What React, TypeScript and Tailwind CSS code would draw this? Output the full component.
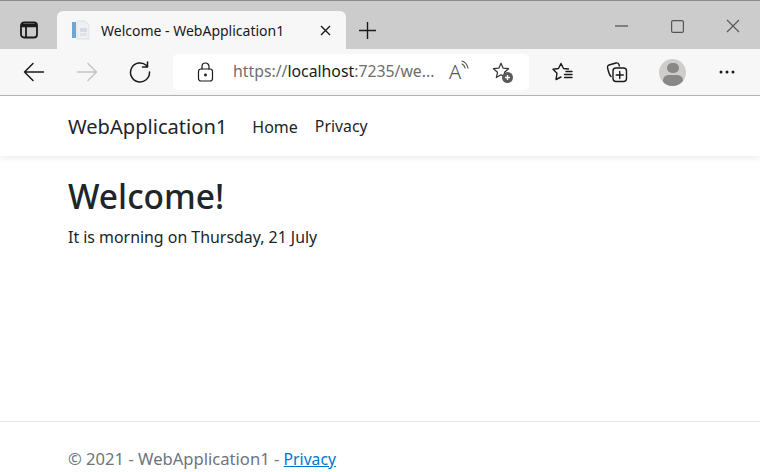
import React from 'react';

const stroke = { fill: 'none', stroke: 'currentColor', strokeWidth: 1.3, strokeLinecap: 'round', strokeLinejoin: 'round' } as const;

const Star = 'M10 2.2l2.2 5 5.4.5-4.1 3.6 1.2 5.3L10 13.8l-4.7 2.8 1.2-5.3-4.1-3.6 5.4-.5z';

const Toolbar: React.FC = () => {
  return (
    <div className="h-[46px] flex items-center bg-[#f7f7f7] text-[#1a1a1a]">
      {/* back / forward / refresh */}
      <div className="w-[173px] shrink-0 flex items-center pl-[23px]">
        <svg className="w-[22px] h-[22px]" viewBox="0 0 22 22" {...stroke} strokeWidth={1.5}>
          <path d="M1.5 11h19M10 2.5L1.5 11l8.500 8.500" />
        </svg>
        <svg className="w-[22px] h-[22px] ml-[31px] text-[#c4c4c4]" viewBox="0 0 22 22" {...stroke} strokeWidth={1.5}>
          <path d="M1.5 11h19M12 2.5l8.500 8.500-8.500 8.500" />
        </svg>
        <svg className="w-[22px] h-[22px] ml-[31px]" viewBox="0 0 22 22" {...stroke} strokeWidth={1.5}>
          <path d="M17.5 4.5A9.5 9.5 0 1 0 20.5 11M18.5 1v5h-5" />
        </svg>
      </div>

      {/* address box */}
      <div className="w-[356px] h-[36px] shrink-0 bg-white rounded-[5px] flex items-center pl-[24px]">
        <svg className="w-[17px] h-[20px]" viewBox="0 0 17 20" {...stroke} strokeWidth={1.2}>
          <rect x="1.5" y="7" width="14" height="12" rx="2.5" />
          <path d="M5 7V4.5a3.5 3.5 0 0 1 7 0V7" />
          <circle cx="8.5" cy="13" r="0.8" fill="currentColor" />
        </svg>
        <span className="ml-[19px] w-[217px] text-[15.8px] text-[#6e6e6e] whitespace-nowrap">
          https://<span className="text-[#1a1a1a]">localhost</span>:7235/we...
        </span>
        <span className="relative w-[20px] -ml-[1px] text-[20px] leading-none font-light text-[#555]">
          A
          <svg className="absolute -top-[2px] left-[11px] w-[9px] h-[10px]" viewBox="0 0 9 10" {...stroke} strokeWidth={1.2}>
            <path d="M2 1c3 1 5 3 6 7M2 4c1.500.5 2.500 1.500 3 4" />
          </svg>
        </span>
        <span className="relative ml-[22px] w-[22px] h-[22px] text-[#333]">
          <svg className="w-[20px] h-[20px]" viewBox="0 0 20 20" {...stroke} strokeWidth={1.2}>
            <path d={Star} />
          </svg>
          <svg className="absolute right-0 bottom-0 w-[11px] h-[11px]" viewBox="0 0 11 11">
            <circle cx="5.5" cy="5.5" r="5.5" fill="#5a5a5a" />
            <path d="M5.5 3v5M3 5.500h5" stroke="#fff" strokeWidth="1.3" />
          </svg>
        </span>
      </div>

      {/* right tools */}
      <div className="flex items-center">
        <svg className="w-[22px] h-[20px] ml-[23px]" viewBox="0 0 22 20" {...stroke} strokeWidth={1.4}>
          <path d="M16.5 7l-5-.5L9 1.500 6.500 6.500 1 7.300l4 3.900-1 6.300 5-2.500M14 9.500h6M12.500 12.500h7.500M12.500 15.500h7.500" />
        </svg>
        <svg className="w-[22px] h-[22px] ml-[32px]" viewBox="0 0 22 22" {...stroke} strokeWidth={1.4}>
          <path d="M5 15.500C3.500 14 2 9 1.500 6.500 1.300 5 2 4.300 3 4l7-2c1.500-.4 2.500.3 3 1.500l.3 1.500" />
          <rect x="7" y="7" width="13.5" height="13.5" rx="3" />
          <path d="M13.750 10.500v7M10.250 14h7" />
        </svg>
        <div className="w-[27px] h-[27px] ml-[31px] rounded-full bg-[#cfcdcb] overflow-hidden flex flex-col items-center">
          <div className="w-[12px] h-[12px] mt-[4px] rounded-full bg-[#8a8886]" />
          <div className="w-[20px] h-[12px] mt-[2px] rounded-full bg-[#8a8886]" />
        </div>
        <svg className="w-[16px] h-[4px] ml-[33px]" viewBox="0 0 16 4" fill="#1a1a1a">
          <circle cx="2" cy="2" r="1.5" />
          <circle cx="8" cy="2" r="1.5" />
          <circle cx="14" cy="2" r="1.5" />
        </svg>
      </div>
    </div>
  );
};

const App: React.FC = () => {
  return (
    <div className="w-[760px] h-[472px] overflow-hidden flex flex-col bg-white font-['Noto_Sans','Open_Sans',sans-serif]">
      {/* title bar */}
      <div className="h-[49px] shrink-0 bg-[#cccccc] border-t border-[#8c8c8c] flex items-end">
        <div className="w-[57px] h-[38px] flex items-center justify-center">
          <svg className="w-[18px] h-[18px]" viewBox="0 0 18 18" fill="none" stroke="#1a1a1a" strokeWidth="1.8">
            <rect x="1" y="1.5" width="16" height="15" rx="3" />
            <path d="M1 4.500h16" strokeWidth="3.5" />
            <path d="M6 6v10" />
          </svg>
        </div>
        <div className="w-[289px] h-[38px] bg-[#f7f7f7] rounded-t-[6px] flex items-center pl-[15px]">
          <svg className="w-[20px] h-[20px]" viewBox="0 0 20 20">
            <rect x="0" y="2" width="4" height="16" fill="#6aa7d8" />
            <path d="M5 1h8l4 4v14H5z" fill="#eef1f4" stroke="#d5d9dd" strokeWidth="0.7" />
            <rect x="8" y="8" width="7" height="4" fill="#d5dbe0" />
            <rect x="8" y="13" width="7" height="3" fill="#dfe3e7" />
          </svg>
          <span className="ml-[9px] w-[219px] text-[14px] text-[#1a1a1a] whitespace-nowrap">Welcome - WebApplication1</span>
          <svg className="w-[11px] h-[11px]" viewBox="0 0 11 11" stroke="#1a1a1a" strokeWidth="1.4">
            <path d="M1 1l9 9M10 1l-9 9" />
          </svg>
        </div>
        <div className="h-[38px] flex items-center ml-[13px]">
          <svg className="w-[17px] h-[17px]" viewBox="0 0 17 17" stroke="#1a1a1a" strokeWidth="1.4">
            <path d="M8.500 0v17M0 8.500h17" />
          </svg>
        </div>
        {/* window controls */}
        <div className="ml-auto self-start flex items-center h-[50px] text-[#555]">
          <svg className="w-[13px] h-[2px]" viewBox="0 0 13 2" stroke="currentColor" strokeWidth="1.3">
            <path d="M0 1h13" />
          </svg>
          <svg className="w-[13px] h-[13px] ml-[43px]" viewBox="0 0 13 13" fill="none" stroke="currentColor" strokeWidth="1.2">
            <rect x="0.6" y="0.6" width="11.8" height="11.8" rx="1.5" />
          </svg>
          <svg className="w-[14px] h-[14px] ml-[42px] mr-[20px]" viewBox="0 0 14 14" stroke="currentColor" strokeWidth="1.1">
            <path d="M1 1l12 12M13 1L1 13" />
          </svg>
        </div>
      </div>

      <Toolbar />
      <div className="h-[1px] shrink-0 bg-[#b5b5b5]" />

      {/* page navbar */}
      <nav className="h-[60px] shrink-0 flex items-center pl-[68px] pt-[2px] bg-white shadow-[0_2px_6px_rgba(0,0,0,0.08)] text-[#212529]">
        <span className="text-[20.1px]">WebApplication1</span>
        <a className="ml-[25px] text-[16px]">Home</a>
        <a className="ml-[17px] text-[15.8px]">Privacy</a>
      </nav>

      {/* page body */}
      <main className="h-[265px] shrink-0 pl-[68px] pt-[16px] text-[#212529]">
        <h1 className="text-[33.5px] leading-[48px] font-medium">Welcome!</h1>
        <p className="mt-[5px] text-[15.9px] leading-[24px]">It is morning on Thursday, 21 July</p>
      </main>

      {/* footer */}
      <footer className="flex-1 border-t border-[#e5e5e5] pl-[68px] pt-[25px] text-[16.6px] leading-[24px] text-[#6c757d]">
        © 2021 - WebApplication1 - <a className="text-[#0077cc] text-[15.7px] underline">Privacy</a>
      </footer>
    </div>
  );
};

export default App;
